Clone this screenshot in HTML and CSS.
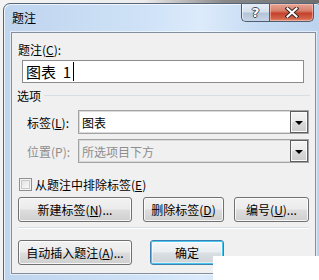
FILE: index.html
```html
<!DOCTYPE html>
<html lang="zh-CN">
<head>
<meta charset="utf-8">
<title>题注</title>
<link rel="stylesheet" href="styles.css">
</head>
<body>
<div class="topstrip"></div>
<div class="window">
  <div class="titlebar">
    <span class="title">题注</span>
    <div class="capbtns">
      <div class="capbtn help"><span class="helpglyph">?</span></div>
      <div class="capbtn close">
        <svg width="14" height="11" viewBox="0 0 14 11">
          <path d="M2.5 1.5 L11.5 9.5 M11.5 1.5 L2.5 9.5" stroke="#3b2a2a" stroke-width="4" stroke-linecap="square" fill="none"/>
          <path d="M2.5 1.5 L11.5 9.5 M11.5 1.5 L2.5 9.5" stroke="#ffffff" stroke-width="2" stroke-linecap="square" fill="none"/>
        </svg>
      </div>
    </div>
  </div>
  <div class="client">
    <div class="lbl caption-lbl">题注(<u>C</u>):</div>
    <div class="textbox"><span class="tbtext">图表&nbsp; 1</span><span class="caret"></span></div>

    <div class="group">
      <span class="group-title">选项</span>
      <span class="group-line"></span>
    </div>

    <div class="row combo-row first">
      <span class="row-lbl">标签(<u>L</u>):</span>
      <div class="combo">
        <span class="combo-text">图表</span>
        <span class="dropbtn"><span class="arrow"></span></span>
      </div>
    </div>
    <div class="row combo-row second">
      <span class="row-lbl disabled">位置(P):</span>
      <div class="combo off">
        <span class="combo-text disabled">所选项目下方</span>
        <span class="dropbtn"><span class="arrow"></span></span>
      </div>
    </div>

    <div class="row check-row">
      <span class="checkbox"></span>
      <span class="check-lbl">从题注中排除标签(<u>E</u>)</span>
    </div>

    <div class="row btn-row one">
      <div class="btn w1">新建标签(<u>N</u>)...</div>
      <div class="btn w2">删除标签(<u>D</u>)</div>
      <div class="btn w3">编号(<u>U</u>)...</div>
    </div>

    <div class="sep"></div>

    <div class="row btn-row two">
      <div class="btn w1">自动插入题注(<u>A</u>)...</div>
      <div class="btn def">确定</div>
    </div>
  </div>
</div>
<div class="wm-cover"></div>
</body>
</html>
```

FILE: styles.css
```css
html, body {
  margin: 0;
  padding: 0;
}
body {
  width: 319px;
  height: 280px;
  overflow: hidden;
  position: relative;
  background: #f3f3f3;
  font-family: "Noto Sans CJK SC", "Noto Sans", sans-serif;
  font-size: 12px;
  color: #000;
}
.topstrip {
  height: 3px;
  background: linear-gradient(to right, #f4f4f4 0%, #ececec 45%, #8a8a8a 70%, #6e6e6e 100%);
}
.window {
  margin-left: 3px;
  width: 320px;
  height: 290px;
  box-sizing: border-box;
  border: 1px solid #56667a;
  border-radius: 7px 7px 0 0;
  background: linear-gradient(to right, #bfd5ee 0%, #cfe2f7 45%, #dcebfb 62%, #c6dbf3 80%, #bcd3ee 100%);
  box-shadow: inset 1px 1px 0 rgba(255,255,255,0.7);
}
.titlebar {
  height: 28px;
  display: flex;
  align-items: flex-start;
}
.title {
  margin-left: 8px;
  margin-top: 6px;
  line-height: 16px;
  font-size: 12px;
  color: #000;
}
.capbtns {
  margin-left: auto;
  margin-right: 8px;
  display: flex;
}
.capbtn {
  height: 18px;
  box-sizing: border-box;
  border: 1px solid #4f5d70;
  border-top: none;
  display: flex;
  align-items: center;
  justify-content: center;
}
.help {
  width: 28px;
  border-right: none;
  border-radius: 0 0 0 5px;
  background: linear-gradient(to bottom, #e4ecf6 0%, #d6e1ee 45%, #b5c5d9 55%, #c6d5e6 100%);
  box-shadow: inset 1px 0 0 rgba(255,255,255,0.6);
}
.helpglyph {
  font-family: "DejaVu Sans", sans-serif;
  font-weight: bold;
  font-size: 13px;
  line-height: 14px;
  color: #fff;
  text-shadow: 1px 0 0 #3f4d5e, -1px 0 0 #3f4d5e, 0 1px 0 #3f4d5e, 0 -1px 0 #3f4d5e;
}
.close {
  width: 45px;
  border-radius: 0 0 5px 0;
  background: linear-gradient(to bottom, #e8a595 0%, #d7806c 40%, #c4422d 55%, #d2624a 85%, #e08e70 100%);
  box-shadow: inset 0 0 0 1px rgba(255,210,200,0.5);
}
.client {
  margin-left: 7px;
  width: 305px;
  height: 242px;
  box-sizing: border-box;
  border: 1px solid #838f9f;
  background: #f0f0f0;
  box-shadow: 0 0 0 1px rgba(255,255,255,0.55);
  display: flex;
  flex-direction: column;
}
.lbl {
  line-height: 15px;
}
.caption-lbl {
  margin-top: 9px;
  margin-left: 6px;
}
.textbox {
  margin-top: 3px;
  margin-left: 10px;
  width: 282px;
  height: 23px;
  box-sizing: border-box;
  border: 1px solid #8c8c8c;
  background: #fff;
  display: flex;
  align-items: center;
  padding-left: 3px;
}
.tbtext {
  font-size: 15px;
  line-height: 19px;
}
.caret {
  width: 1px;
  height: 19px;
  background: #000;
  margin-left: 2px;
}
.group {
  margin-top: 5px;
  margin-left: 5px;
  margin-right: 5px;
  display: flex;
  align-items: center;
  height: 15px;
}
.group-title {
  line-height: 15px;
}
.group-line {
  flex: 1;
  height: 1px;
  margin-left: 3px;
  background: #d5dfe5;
}
.row {
  display: flex;
  align-items: center;
}
.combo-row.first {
  margin-top: 7px;
}
.combo-row.second {
  margin-top: 5px;
}
.row-lbl {
  margin-left: 15px;
  width: 51px;
  line-height: 15px;
}
.disabled {
  color: #8d8d8d;
}
.combo {
  width: 231px;
  height: 24px;
  box-sizing: border-box;
  border: 1px solid #a3a3a3;
  box-shadow: inset 0 0 0 1px #dadada;
  background: #fff;
  display: flex;
  align-items: center;
  padding-left: 3px;
}
.combo.off {
  background: #f0f0f0;
}
.combo-text {
  line-height: 15px;
  flex: 1;
}
.dropbtn {
  width: 18px;
  height: 22px;
  box-sizing: border-box;
  border: 1px solid #5e5e5e;
  background: linear-gradient(to bottom, #f4f4f4 0%, #ebebeb 48%, #dadada 52%, #cdcdcd 100%);
  box-shadow: inset 0 0 0 1px #fbfbfb;
  display: flex;
  align-items: center;
  justify-content: center;
}
.arrow {
  width: 0;
  height: 0;
  border-left: 4px solid transparent;
  border-right: 4px solid transparent;
  border-top: 4px solid #000;
  margin-top: 1px;
}
.check-row {
  margin-top: 14px;
  margin-left: 7px;
  height: 15px;
}
.checkbox {
  width: 13px;
  height: 13px;
  box-sizing: border-box;
  border: 1px solid #8e8f8f;
  background: linear-gradient(135deg, #dcdcdc 0%, #f2f2f2 60%, #fdfdfd 100%);
  box-shadow: inset 0 0 0 1px #f4f4f4, inset 0 0 0 2px #c9c9c9;
}
.check-lbl {
  margin-left: 3px;
  line-height: 15px;
}
.btn-row {
  margin-left: 6px;
}
.btn-row.one {
  margin-top: 5px;
}
.btn-row.two {
  margin-top: 12px;
}
.btn {
  height: 25px;
  box-sizing: border-box;
  border: 1px solid #707070;
  border-radius: 3px;
  background: linear-gradient(to bottom, #f2f2f2 0%, #ebebeb 48%, #dddddd 52%, #cfcfcf 100%);
  box-shadow: inset 0 0 0 1px rgba(255,255,255,0.8);
  display: flex;
  align-items: center;
  justify-content: center;
  line-height: 15px;
}
.w1 { width: 114px; }
.w2 { width: 81px; margin-left: 11px; }
.w3 { width: 75px; margin-left: 10px; }
.def {
  width: 74px;
  margin-left: 18px;
  border-color: #3c7fb1;
  box-shadow: inset 0 0 0 1px #48c6f0, inset 0 0 0 2px rgba(255,255,255,0.5);
  background: linear-gradient(to bottom, #f4f6f8 0%, #eaeef0 48%, #d9dfe2 52%, #cdd3d6 100%);
}
.sep {
  margin-top: 5px;
  margin-left: 6px;
  width: 291px;
  height: 1px;
  background: #d5dfe5;
  box-shadow: 0 1px 0 #fff;
}
.wm-cover {
  position: absolute;
  left: 213px;
  top: 256px;
  width: 106px;
  height: 24px;
  background: #fff;
}
```
